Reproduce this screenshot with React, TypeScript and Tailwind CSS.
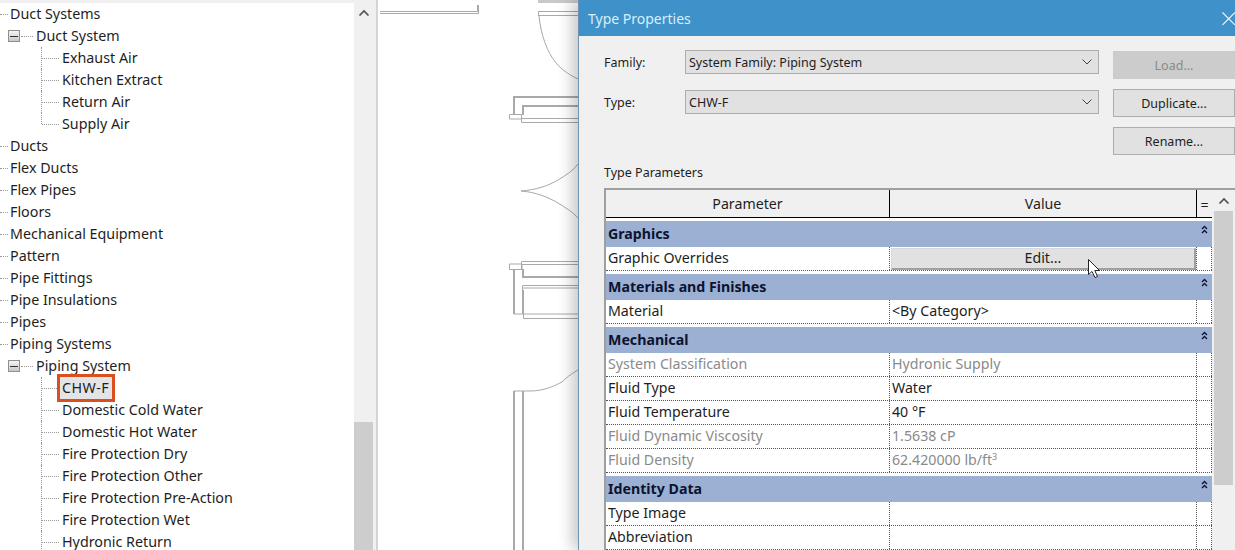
import React from "react";

const TEXT = "text-[#1e1e1e]";

function Expander() {
  return (
    <div className="flex h-[12px] w-[12px] flex-none items-center justify-center border border-[#8f8f8f] bg-gradient-to-b from-[#f4f4f4] to-[#c9c9c9]">
      <div className="h-px w-[8px] bg-[#333]" />
    </div>
  );
}

function TopRow({ label }: { label: string }) {
  return (
    <div className="flex h-[22px] items-center">
      <div className="mr-[2px] w-[8px] border-t border-dotted border-[#999]" />
      <span className={TEXT}>{label}</span>
    </div>
  );
}

function ParentRow({ label }: { label: string }) {
  return (
    <div className="flex h-[22px] items-center pl-[8px]">
      <Expander />
      <div className="ml-px mr-[3px] w-[12px] border-t border-dotted border-[#999]" />
      <span className={TEXT}>{label}</span>
    </div>
  );
}

function ChildRow({ label, last, selected }: { label: string; last?: boolean; selected?: boolean }) {
  return (
    <div className="flex h-[22px] items-center pl-[41px]">
      <div className={`flex-none self-start border-l border-dotted border-[#999] ${last ? "h-[11px]" : "h-[22px]"}`} />
      <div className="mr-[3px] w-[17px] border-t border-dotted border-[#999]" />
      {selected ? (
        <span className="-ml-[5px] flex h-[28px] w-[58px] flex-none items-center border-[3px] border-[#d9501e] bg-[#e4e4e6] pl-[2px] tracking-[0.4px] text-[#1e1e1e]">
          {label}
        </span>
      ) : (
        <span className={TEXT}>{label}</span>
      )}
    </div>
  );
}

function Tree() {
  return (
    <div className="h-full w-[354px] flex-none overflow-hidden border-t-[3px] border-[#f0f0f0] bg-white text-[14.3px] font-['Noto_Sans',sans-serif] leading-[22px]">
      <TopRow label="Duct Systems" />
      <ParentRow label="Duct System" />
      <ChildRow label="Exhaust Air" />
      <ChildRow label="Kitchen Extract" />
      <ChildRow label="Return Air" />
      <ChildRow label="Supply Air" last />
      <TopRow label="Ducts" />
      <TopRow label="Flex Ducts" />
      <TopRow label="Flex Pipes" />
      <TopRow label="Floors" />
      <TopRow label="Mechanical Equipment" />
      <TopRow label="Pattern" />
      <TopRow label="Pipe Fittings" />
      <TopRow label="Pipe Insulations" />
      <TopRow label="Pipes" />
      <TopRow label="Piping Systems" />
      <ParentRow label="Piping System" />
      <ChildRow label="CHW-F" selected />
      <ChildRow label="Domestic Cold Water" />
      <ChildRow label="Domestic Hot Water" />
      <ChildRow label="Fire Protection Dry" />
      <ChildRow label="Fire Protection Other" />
      <ChildRow label="Fire Protection Pre-Action" />
      <ChildRow label="Fire Protection Wet" />
      <ChildRow label="Hydronic Return" />
    </div>
  );
}

function UpArrow() {
  return (
    <svg width="12" height="8" viewBox="0 0 12 8" fill="none" stroke="#505050" strokeWidth="1.7">
      <path d="M1.5 6.5 L6 2 L10.5 6.5" />
    </svg>
  );
}

function TreeScrollbar() {
  return (
    <div className="flex h-full w-[22px] flex-none flex-col bg-[#f0f0f0]">
      <div className="flex h-[422px] w-[19px] flex-none justify-center pt-[9px]">
        <UpArrow />
      </div>
      <div className="w-[19px] flex-1 bg-[#cdcdcd]" />
    </div>
  );
}

function Drawing() {
  return (
    <svg className="block h-[550px] w-[200px] flex-none" viewBox="378 0 200 550" fill="none" stroke="#a9a9a9" strokeWidth="1">
      <path d="M380 11.5H477.5V5M380 13.5H478.5V5" />
      <path d="M538 0H578" strokeWidth="6" stroke="#c9c9c9" />
      <path d="M538.5 16V11.5H578M538.5 15.5H578" />
      <path d="M539 16C541 35 547 52 556 63C563 71 570 75 578 79" />
      <path d="M514 115V97H578" strokeWidth="2" />
      <path d="M523 115V106H578" strokeWidth="2" />
      <path d="M509.5 114.5H521.5V119H509.5ZM521.5 119V122.5H578M521 118.5H578" />
      <path d="M521 191C535 190 548 186 558 180C566 175 573 171 578 164" />
      <path d="M521 191C535 192 548 197 558 203C566 208 573 212 578 218" />
      <path d="M521.5 270V261.5H578M521.5 264.5H578M509.5 264H522V269.5H509.5Z" />
      <path d="M514 269V314" strokeWidth="2" />
      <path d="M523 269V277H578" strokeWidth="2" />
      <path d="M522.5 286V314M522.5 285.5H578M523 288H578" />
      <path d="M523 290V314" strokeWidth="2" />
      <path d="M514 314H578M523.5 314V318.5H578" />
      <path d="M514 391H530C545 391 556 385 562 382C568 376 573 373 578 370" />
      <path d="M514 391V550M523 391V550" strokeWidth="2" />
    </svg>
  );
}

function Chevron() {
  return (
    <svg width="10" height="6" viewBox="0 0 10 6" fill="none" stroke="#444" strokeWidth="1">
      <path d="M0.5 0.5 L5 5 L9.5 0.5" />
    </svg>
  );
}

function Select({ value }: { value: string }) {
  return (
    <div className="flex h-[24px] w-[414px] flex-none items-center justify-between border border-[#adadad] bg-[#e1e1e1] pl-[3px] pr-[6px] text-[#1e1e1e]">
      <span className="pt-[2px]">{value}</span>
      <Chevron />
    </div>
  );
}

function Btn({ label, disabled }: { label: string; disabled?: boolean }) {
  return (
    <div
      className={`flex h-[28px] w-[122px] items-center justify-center border pt-[2px] ${
        disabled ? "border-[#cccccc] bg-[#cccccc] text-[#8a8a8a]" : "border-[#adadad] bg-[#e1e1e1] text-[#1e1e1e]"
      }`}
    >
      {label}
    </div>
  );
}

function Collapse() {
  return (
    <svg width="7" height="9" viewBox="0 0 7 9" fill="none" stroke="#0c1330" strokeWidth="1.3">
      <path d="M1 4 L3.5 1.5 L6 4M1 8 L3.5 5.5 L6 8" />
    </svg>
  );
}

function Group({ label }: { label: string }) {
  return (
    <div className="mt-[3px] flex h-[26px] bg-[#9bb0d2]">
      <div className="flex w-[284px] flex-none items-center pb-px pl-[2px] font-bold text-[#0c1330]">{label}</div>
      <div className="w-[307px] flex-none" />
      <div className="flex flex-1 justify-center pt-[4px]">
        <Collapse />
      </div>
    </div>
  );
}

function Row({ name, value, dim, children }: { name: string; value?: React.ReactNode; dim?: boolean; children?: React.ReactNode }) {
  const color = dim ? "text-[#8a8a8a]" : "text-[#1e1e1e]";
  return (
    <div className={`flex h-[24px] border-b border-dotted border-[#555] bg-white ${color}`}>
      <div className="flex w-[284px] flex-none items-center border-r border-dotted border-[#555] pb-[2px] pl-[2px]">{name}</div>
      <div className={`flex w-[307px] flex-none items-center border-r border-dotted border-[#555] pl-[2px] ${children ? "" : "pb-[2px]"}`}>
        {children ?? value}
      </div>
      <div className="flex-1 border-r border-dotted border-[#555]" />
    </div>
  );
}

function Table() {
  return (
    <div className="flex border-t-2 border-[#9f9f9f]">
      <div className="h-[360px] w-[608px] flex-none border-l-2 border-[#9f9f9f] bg-white text-[14.2px]">
        <div className="flex h-[28px] border-b border-black bg-[#f0f0f0] text-[#1e1e1e]">
          <div className="flex w-[284px] flex-none items-center justify-center border-r border-black">Parameter</div>
          <div className="flex w-[307px] flex-none items-center justify-center border-r border-black">Value</div>
          <div className="flex flex-1 items-center justify-center pt-[3px]">=</div>
        </div>
        <Group label="Graphics" />
        <Row name="Graphic Overrides">
          <div className="-ml-px flex h-[22px] w-[306px] items-center justify-center border border-b-2 border-r-2 border-[#d8d8d8] border-b-[#a0a0a0] border-r-[#a0a0a0] bg-[#e1e1e1]">
            Edit...
          </div>
        </Row>
        <Group label="Materials and Finishes" />
        <Row name="Material" value="<By Category>" />
        <Group label="Mechanical" />
        <Row name="System Classification" value="Hydronic Supply" dim />
        <Row name="Fluid Type" value="Water" />
        <Row name="Fluid Temperature" value="40 °F" />
        <Row name="Fluid Dynamic Viscosity" value="1.5638 cP" dim />
        <Row
          name="Fluid Density"
          dim
          value={
            <span>
              62.420000 lb/ft<sup className="text-[9px]">3</sup>
            </span>
          }
        />
        <Group label="Identity Data" />
        <Row name="Type Image" />
        <Row name="Abbreviation" />
      </div>
      <div className="flex w-[23px] flex-none flex-col bg-[#f0f0f0] pl-[2px]">
        <div className="flex h-[21px] w-[19px] justify-center pt-[7px]">
          <UpArrow />
        </div>
        <div className="h-[274px] w-[19px] bg-[#cdcdcd]" />
      </div>
    </div>
  );
}

function Dialog() {
  return (
    <div className="relative h-full flex-1 overflow-visible border-l border-[#6f93b3] bg-[#f0f0f0] text-[12.5px] font-['Noto_Sans',sans-serif] shadow-[-6px_0_14px_rgba(0,0,0,0.22)]">
      <div className="flex h-[36px] items-center justify-between bg-[#3f92c9] pl-[9px] text-[14px] text-[#d8eefa]">
        <span>Type Properties</span>
        <svg width="13" height="13" viewBox="0 0 13 13" stroke="#e6f3fb" strokeWidth="1.2" fill="none">
          <path d="M0.5 0.5L13 13M13 0.5L0.5 13" />
        </svg>
      </div>
      <div className="pl-[25px]">
        <div className="flex pt-[14px]">
          <div className="flex flex-col gap-[16px]">
            <div className="flex items-center">
              <span className="w-[81px] pt-[2px] text-[#1e1e1e]">Family:</span>
              <Select value="System Family: Piping System" />
            </div>
            <div className="flex items-center">
              <span className="w-[81px] pt-[2px] text-[#1e1e1e]">Type:</span>
              <Select value="CHW-F" />
            </div>
          </div>
          <div className="ml-[14px] mt-px flex flex-col gap-[10px]">
            <Btn label="Load..." disabled />
            <Btn label="Duplicate..." />
            <Btn label="Rename..." />
          </div>
        </div>
        <div className="mb-[6px] mt-[7px] flex h-[20px] items-center pt-[2px] text-[#1e1e1e]">Type Parameters</div>
        <Table />
      </div>
    </div>
  );
}

function Cursor() {
  return (
    <svg className="absolute left-[1087px] top-[258px] z-10" width="15" height="21" viewBox="0 0 15 21">
      <path d="M1.5 1.5V16.5L5 13.5L8 19.5L10.5 18.5L7.8 12.5H12.5Z" fill="#fff" stroke="#222" strokeWidth="1" />
    </svg>
  );
}

export default function App() {
  return (
    <div className="relative flex h-[550px] w-[1235px] overflow-hidden bg-white">
      <Tree />
      <TreeScrollbar />
      <div className="h-full w-[2px] flex-none bg-[#d4d4d4]" />
      <Drawing />
      <Dialog />
      <Cursor />
    </div>
  );
}
